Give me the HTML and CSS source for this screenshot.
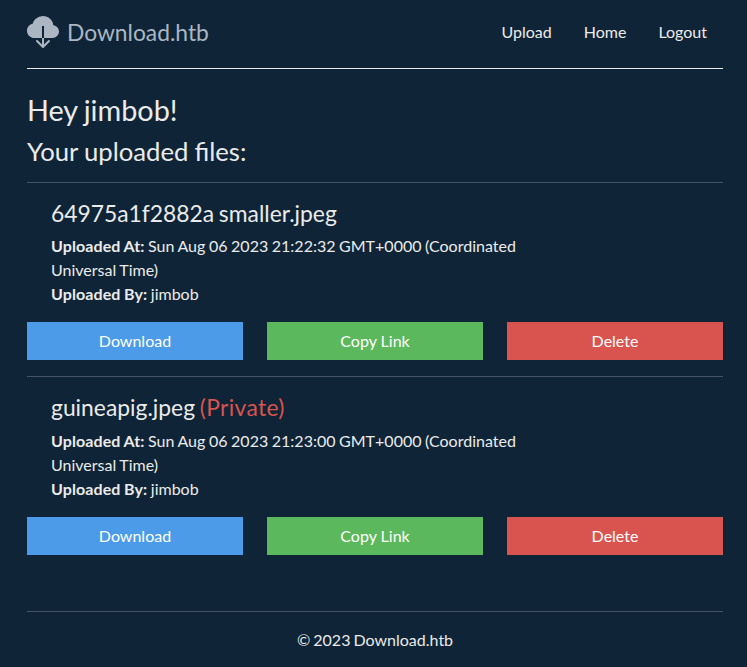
FILE: index.html
```
<!DOCTYPE html>
<html lang="en">
<head>
<meta charset="utf-8">
<title>Download.htb</title>
<link rel="stylesheet" href="styles.css">
</head>
<body>
<div class="container">
  <header class="header">
    <a class="brand" href="#">
      <svg class="brand-icon" viewBox="0 0 16 16" width="32" height="32" fill="currentColor"><path d="M8 0a5.53 5.53 0 0 0-3.594 1.342c-.766.66-1.321 1.52-1.464 2.383C1.266 4.095 0 5.555 0 7.318 0 9.366 1.708 11 3.781 11H7.5V5h1v6h4.188C14.502 11 16 9.57 16 7.773c0-1.636-1.242-2.969-2.834-3.194C12.923 1.999 10.69 0 8 0zm-.354 15.854a.5.5 0 0 0 .708 0l3-3a.5.5 0 0 0-.708-.708L8.5 14.293V11h-1v3.293l-2.146-2.147a.5.5 0 0 0-.708.708l3 3z"/></svg>
      <span>Download.htb</span>
    </a>
    <nav class="nav"><a href="#">Upload</a><a href="#">Home</a><a href="#">Logout</a></nav>
  </header>
  <main>
    <h1>Hey jimbob!</h1>
    <h2>Your uploaded files:</h2>
    <section class="file">
      <div class="info">
        <h3>64975a1f2882a smaller.jpeg</h3>
        <p><strong>Uploaded At:</strong> Sun Aug 06 2023 21:22:32 GMT+0000 (Coordinated Universal Time)</p>
        <p><strong>Uploaded By:</strong> jimbob</p>
      </div>
      <div class="actions"><a class="btn blue" href="#">Download</a><a class="btn green" href="#">Copy Link</a><a class="btn red" href="#">Delete</a></div>
    </section>
    <section class="file">
      <div class="info">
        <h3>guineapig.jpeg <span class="private">(Private)</span></h3>
        <p><strong>Uploaded At:</strong> Sun Aug 06 2023 21:23:00 GMT+0000 (Coordinated Universal Time)</p>
        <p><strong>Uploaded By:</strong> jimbob</p>
      </div>
      <div class="actions"><a class="btn blue" href="#">Download</a><a class="btn green" href="#">Copy Link</a><a class="btn red" href="#">Delete</a></div>
    </section>
  </main>
  <footer class="footer">© 2023 Download.htb</footer>
</div>
</body>
</html>
```
FILE: styles.css
```
* { box-sizing: border-box; }
body {
  margin: 0;
  background: #0f2537;
  color: #ebebeb;
  font: 400 16px/24px Lato, sans-serif;
}
a { color: inherit; text-decoration: none; }
h1, h2, h3, p { margin: 0; font-weight: 400; }
.container { width: 696px; margin-left: 27px; }
.header {
  display: flex;
  align-items: center;
  justify-content: space-between;
  height: 69px;
  padding-bottom: 4px;
  border-bottom: 1px solid #ebebeb;
}
.brand { display: flex; align-items: center; gap: 8px; color: #abb6c2; font-size: 22.8px; line-height: 36px; }
.brand-icon { display: block; }
.nav { display: flex; gap: 32px; padding-right: 16px; }
h1 { margin-top: 24px; font-size: 28.8px; line-height: 35px; word-spacing: -1.2px; }
h2 { margin: 8px 0 15px; font-size: 25.7px; line-height: 31px; word-spacing: -0.5px; }
h3 { margin-bottom: 7px; font-size: 22.85px; line-height: 28px; word-spacing: -1.2px; }
p { word-spacing: -0.5px; }
strong { letter-spacing: 0.1px; }
.file { height: 194px; padding-top: 16px; border-top: 1px solid #435463; }
.file + .file { height: 196px; }
.info { width: 520px; padding: 0 24px; }
.file + .file h3 { margin-bottom: 8px; }
.private { color: #d9534f; letter-spacing: 0.35px; }
.actions { display: grid; grid-template-columns: repeat(3, 1fr); gap: 24px; margin-top: 16px; }
.btn { height: 38px; line-height: 38px; text-align: center; color: #fff; }
.blue { background: #4c9be8; }
.green { background: #5cb85c; }
.red { background: #d9534f; }
.footer { margin-top: 39px; padding: 16px 0; border-top: 1px solid #435463; text-align: center; word-spacing: -1px; }
```
